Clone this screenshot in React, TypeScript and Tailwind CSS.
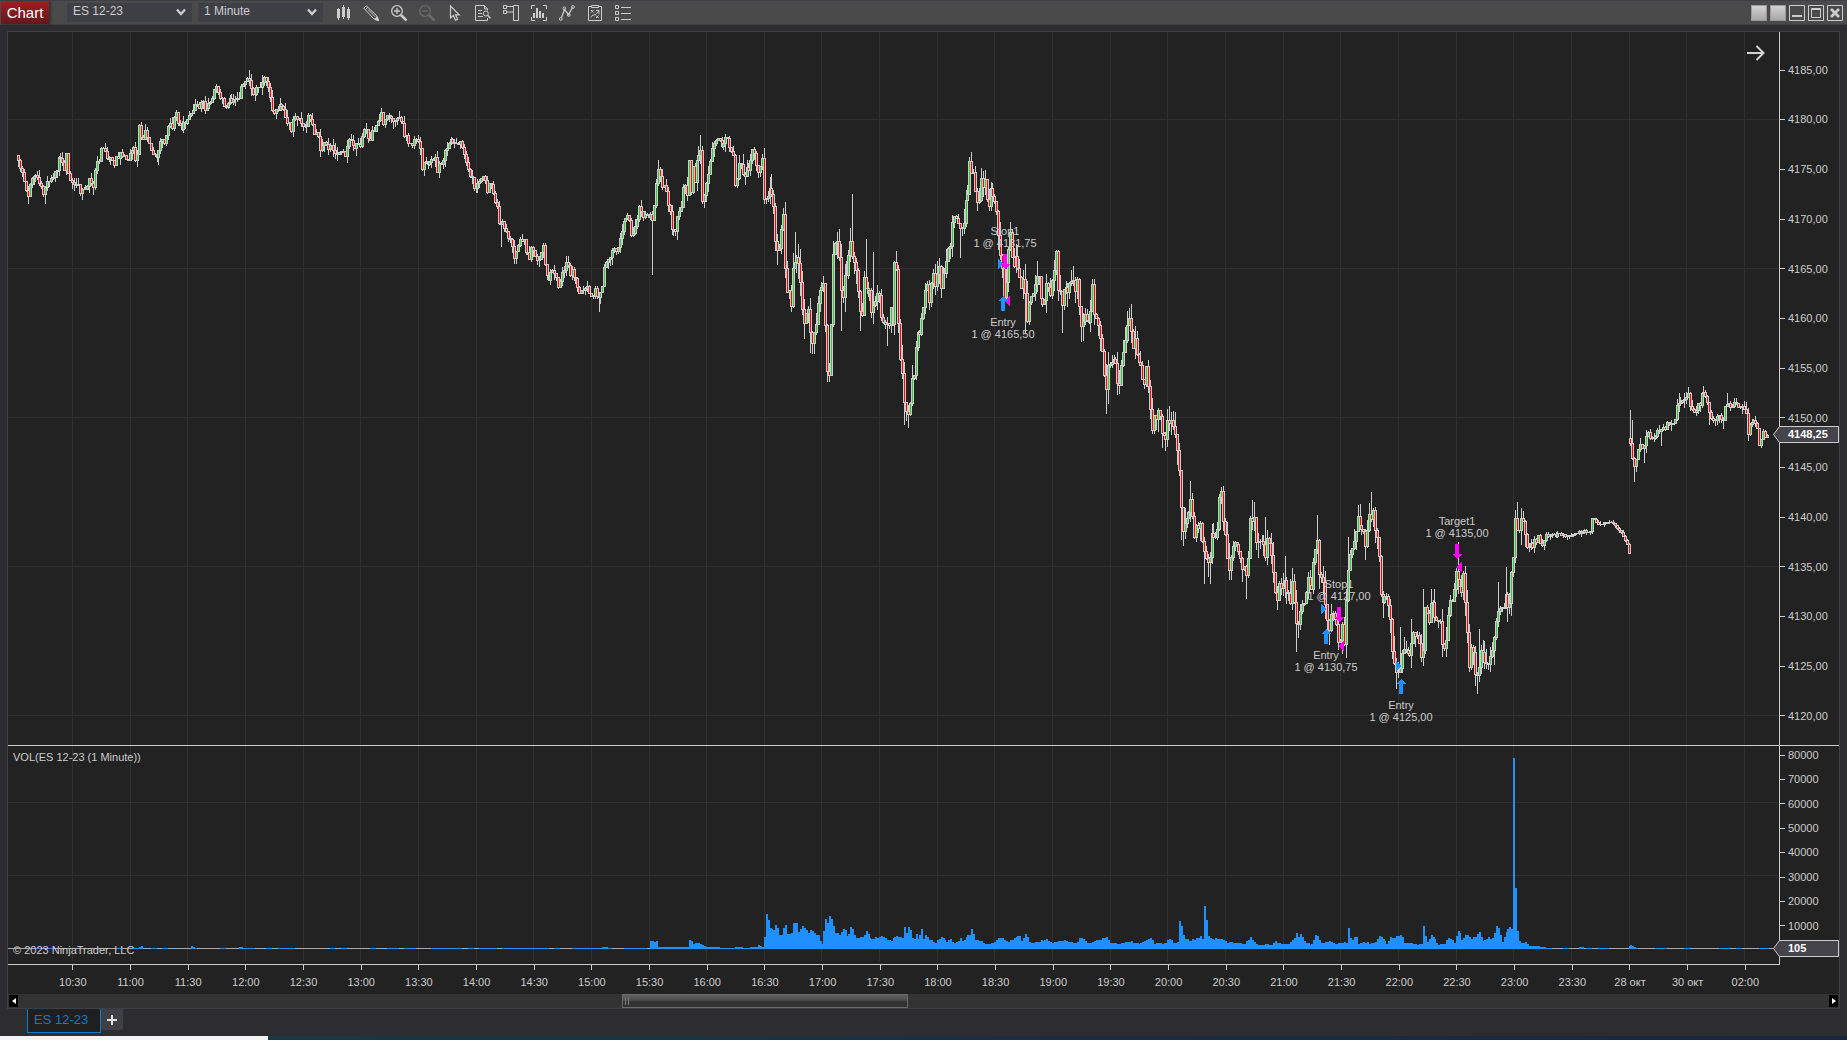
import type { ReactNode } from "react";

type Point = [number, number];

interface Candle {
  x: number;
  open: number;
  close: number;
  high: number;
  low: number;
}

interface Trade {
  name: string;
  detail: string;
  x: number;
  y: number;
}

const PRICE_VIEW = { x: 8, y: 32, width: 1771, height: 713 };
const VOLUME_VIEW = { x: 8, y: 746, width: 1771, height: 218 };
const BAR_STEP = 57.65 / 30;
const VOLUME_BASE = 949;

const PRICE_LABELS = [
  "4185,00", "4180,00", "4175,00", "4170,00", "4165,00", "4160,00", "4155,00",
  "4150,00", "4145,00", "4140,00", "4135,00", "4130,00", "4125,00", "4120,00",
];

const VOLUME_LABELS = ["80000", "70000", "60000", "50000", "40000", "30000", "20000", "10000"];

const TIME_LABELS = [
  "10:30", "11:00", "11:30", "12:00", "12:30", "13:00", "13:30", "14:00", "14:30", "15:00",
  "15:30", "16:00", "16:30", "17:00", "17:30", "18:00", "18:30", "19:00", "19:30", "20:00",
  "20:30", "21:00", "21:30", "22:00", "22:30", "23:00", "23:30", "28 окт", "30 окт", "02:00",
];

// closes of the main session
const SESSION: Point[] = [
  [16, 155], [18, 163], [22, 170], [25, 183], [27, 198], [29, 188], [31, 179], [35, 172], [38, 184], [40, 178],
  [43, 196], [45, 186], [49, 181], [53, 177], [57, 167], [60, 156], [62, 165], [64, 172], [66, 155], [68, 172],
  [71, 180], [74, 183], [77, 186], [80, 190], [83, 191], [86, 184], [90, 178], [93, 185], [96, 160], [99, 158],
  [101, 146], [105, 153], [108, 159], [112, 160], [114, 163], [117, 155], [121, 154], [126, 157], [131, 155],
  [133, 147], [136, 164], [139, 127], [142, 144], [145, 130], [148, 142], [151, 150], [154, 156], [157, 158],
  [160, 143], [164, 140], [167, 127], [170, 121], [172, 129], [174, 116], [176, 115], [179, 127], [181, 128],
  [184, 121], [188, 120], [191, 113], [195, 107], [200, 106], [203, 104], [206, 113], [209, 99], [211, 106],
  [214, 88], [216, 88], [219, 94], [223, 101], [227, 109], [230, 100], [234, 98], [239, 98], [240, 85], [243, 82],
  [246, 79], [248, 74], [251, 87], [254, 94], [257, 85], [260, 89], [264, 80], [267, 82], [270, 94], [273, 114],
  [277, 112], [281, 103], [284, 115], [288, 121], [291, 128], [294, 119], [298, 115], [302, 123], [305, 128],
  [308, 118], [311, 120], [314, 136], [317, 132], [321, 151], [324, 142], [327, 146], [332, 148], [336, 157],
  [341, 153], [345, 155], [348, 140], [353, 145], [360, 144], [363, 131], [366, 130], [369, 141], [373, 130],
  [378, 123], [381, 112], [383, 125], [388, 114], [392, 117], [396, 120], [402, 119], [404, 133], [409, 144],
  [414, 140], [419, 137], [422, 168], [425, 161], [430, 163], [434, 156], [437, 170], [442, 158], [446, 152],
  [449, 142], [455, 140], [460, 143], [463, 151], [466, 165], [470, 174], [474, 186], [478, 184], [480, 181],
  [484, 172], [487, 192], [489, 186], [492, 187], [495, 200], [497, 207], [500, 228], [503, 222], [505, 228],
  [508, 240], [511, 238], [514, 255], [518, 245], [521, 240], [524, 240], [528, 258], [531, 250], [535, 257],
  [538, 259], [541, 253], [543, 248], [546, 270], [549, 278], [552, 270], [555, 275], [558, 284], [562, 275],
  [565, 265], [568, 265], [570, 274], [573, 271], [577, 288], [580, 294], [584, 288], [588, 290], [591, 296],
  [595, 290], [599, 300], [602, 285], [604, 265], [606, 260], [609, 257], [613, 248], [617, 253], [620, 240],
  [623, 227], [625, 216], [629, 220], [631, 235], [635, 225], [639, 208], [643, 217], [647, 214], [650, 215],
  [652, 225], [654, 208], [655, 182], [659, 171], [661, 176], [663, 193], [665, 180], [668, 200], [671, 221],
  [674, 235], [677, 218], [681, 202], [684, 181], [687, 193], [689, 160], [691, 193], [693, 166], [695, 178],
  [698, 155], [701, 148], [702, 200], [705, 192], [708, 170], [711, 153], [715, 143], [719, 142], [723, 146],
  [727, 137], [730, 158], [733, 152], [735, 181], [738, 170], [741, 165], [744, 178], [748, 168], [752, 147],
  [755, 160], [758, 176], [762, 162], [764, 192], [767, 195], [771, 188], [773, 204], [775, 237], [779, 250],
  [783, 218], [784, 255], [787, 285], [791, 302], [793, 265], [798, 260], [801, 290], [804, 330], [808, 303],
  [810, 337], [813, 345], [817, 315], [820, 283], [824, 285], [826, 362], [829, 370], [831, 318], [833, 255],
  [835, 243], [839, 252], [842, 300], [845, 280], [848, 262], [850, 235], [852, 262], [855, 265], [859, 300],
  [862, 320], [864, 270], [867, 300], [869, 285], [871, 313], [875, 295], [878, 290], [881, 316], [885, 325],
  [889, 332], [891, 310], [893, 318], [894, 262], [896, 262], [897, 310], [899, 350], [903, 390], [905, 412],
  [908, 419], [911, 385], [914, 370], [916, 340], [919, 335], [921, 320], [924, 300], [926, 280], [929, 298],
  [932, 275], [935, 288], [938, 260], [940, 285], [943, 275], [946, 258], [950, 243], [952, 217], [957, 222],
  [961, 240], [965, 216], [967, 190], [969, 165], [972, 168], [975, 190], [978, 213], [980, 183], [984, 180],
  [988, 202], [992, 193], [995, 205], [998, 230], [1001, 262], [1004, 293], [1006, 275], [1008, 250], [1010, 235],
  [1013, 262], [1016, 255], [1018, 270], [1021, 288], [1024, 275], [1026, 320], [1029, 300], [1032, 292],
  [1036, 283], [1039, 282], [1043, 303], [1046, 278], [1050, 290], [1053, 270], [1056, 257], [1058, 285],
  [1062, 310], [1065, 270], [1068, 305], [1070, 273], [1074, 290], [1077, 275], [1079, 305], [1082, 330],
  [1086, 315], [1089, 320], [1092, 290], [1095, 320], [1099, 335], [1102, 352], [1106, 395], [1108, 372],
  [1112, 360], [1116, 370], [1118, 387], [1121, 360], [1124, 340], [1127, 322], [1130, 320], [1132, 348],
  [1136, 342], [1140, 365], [1143, 385], [1146, 372], [1149, 395], [1151, 432], [1154, 420], [1158, 410],
  [1162, 435], [1166, 432], [1170, 414], [1174, 421], [1176, 441], [1178, 448], [1180, 491], [1182, 528],
  [1184, 523], [1188, 509], [1191, 502], [1193, 539], [1198, 526], [1201, 532], [1205, 550], [1209, 573],
  [1212, 539], [1217, 528], [1220, 489], [1223, 516], [1226, 545], [1230, 571], [1235, 536], [1239, 553],
  [1243, 566], [1247, 575], [1250, 518], [1254, 518], [1257, 553], [1261, 532], [1264, 555], [1268, 539],
  [1272, 555], [1275, 598], [1280, 588], [1284, 577], [1289, 601], [1293, 582], [1297, 643], [1299, 608],
  [1302, 598], [1305, 604], [1308, 582], [1312, 582], [1316, 530], [1319, 571], [1322, 577], [1325, 604],
  [1328, 627], [1332, 617], [1336, 629], [1339, 644], [1342, 628], [1344, 641], [1347, 579], [1349, 555],
  [1353, 545], [1356, 525], [1360, 521], [1363, 534], [1366, 545], [1370, 512], [1373, 511], [1376, 539],
  [1379, 555], [1382, 612], [1386, 593], [1390, 614], [1392, 650], [1396, 673], [1400, 673], [1403, 641],
  [1407, 650], [1410, 655], [1412, 630], [1417, 641], [1422, 659], [1425, 614], [1429, 620], [1432, 598],
  [1435, 625], [1439, 614], [1442, 641], [1446, 644], [1449, 604], [1453, 591], [1457, 571], [1460, 601],
  [1462, 571], [1464, 585], [1466, 625], [1469, 662], [1472, 638], [1475, 673], [1478, 681], [1481, 644],
  [1485, 673], [1488, 662], [1492, 657], [1495, 625], [1500, 609], [1504, 604], [1506, 588], [1508, 612],
  [1511, 577], [1513, 550], [1514, 518], [1518, 529], [1521, 515], [1525, 529], [1527, 548], [1532, 545],
  [1538, 537], [1543, 547], [1546, 534], [1552, 535], [1560, 534], [1572, 535], [1580, 532], [1590, 531],
  [1592, 519], [1598, 524], [1606, 521], [1614, 524], [1620, 531], [1626, 543], [1630, 554],
];

// closes after the weekend gap
const REOPEN: Point[] = [
  [1629, 438], [1633, 465], [1636, 459], [1640, 445], [1641, 450], [1644, 448], [1647, 430], [1652, 438],
  [1656, 433], [1662, 430], [1667, 423], [1674, 421], [1677, 405], [1681, 402], [1687, 392], [1690, 405],
  [1694, 409], [1699, 405], [1703, 391], [1706, 395], [1709, 415], [1714, 422], [1718, 413], [1723, 418],
  [1726, 401], [1729, 408], [1734, 403], [1740, 407], [1746, 410], [1748, 434], [1753, 417], [1757, 430],
  [1759, 443], [1763, 430], [1766, 437], [1768, 436],
];

// tips of the long wicks
const WICKS: Point[] = [
  [28, 203], [44, 203], [61, 152], [249, 70], [501, 246], [514, 263], [599, 311], [652, 274], [657, 160],
  [699, 135], [777, 264], [777, 240], [795, 232], [797, 244], [804, 338], [810, 352], [827, 375], [836, 232],
  [841, 330], [851, 194], [860, 330], [866, 239], [873, 252], [887, 345], [904, 424], [908, 427], [960, 257],
  [971, 152], [1010, 222], [1025, 332], [1037, 264], [1062, 332], [1083, 340], [1093, 279], [1106, 413],
  [1135, 326], [1169, 410], [1173, 411], [1181, 539], [1190, 481], [1204, 583], [1210, 583], [1220, 487],
  [1246, 598], [1252, 500], [1254, 502], [1265, 517], [1285, 556], [1296, 651], [1317, 515], [1331, 604],
  [1341, 653], [1348, 537], [1358, 505], [1371, 492], [1396, 688], [1400, 627], [1411, 619], [1423, 589],
  [1431, 589], [1442, 656], [1458, 542], [1477, 693], [1479, 629], [1498, 582], [1506, 567], [1517, 502],
  [1630, 410], [1632, 420], [1634, 481], [1644, 462], [1661, 445], [1679, 393], [1703, 386], [1709, 424],
  [1723, 428], [1727, 393], [1748, 440],
];

const VOLUME: Point[] = [
  [16, 1], [138, 1], [141, 3], [143, 1], [190, 1], [192, 3], [194, 1], [238, 1], [240, 2], [243, 1], [600, 1],
  [604, 2], [608, 1], [650, 1], [651, 8], [657, 7], [658, 2], [688, 2], [690, 9], [693, 5], [698, 6], [702, 4],
  [706, 2], [730, 1], [740, 2], [745, 1], [757, 2], [759, 4], [761, 2], [763, 2], [765, 12], [767, 35], [769, 22],
  [771, 20], [774, 17], [776, 24], [779, 16], [781, 13], [785, 24], [787, 14], [791, 15], [794, 26], [796, 26],
  [798, 16], [803, 23], [805, 18], [811, 17], [815, 15], [819, 13], [821, 5], [823, 4], [825, 30], [827, 23],
  [830, 33], [832, 26], [835, 17], [838, 14], [844, 20], [848, 10], [851, 22], [853, 14], [858, 10], [862, 12],
  [867, 19], [870, 9], [875, 12], [880, 11], [882, 14], [888, 10], [892, 8], [896, 13], [900, 11], [903, 11],
  [905, 22], [907, 12], [909, 22], [912, 12], [914, 8], [916, 14], [919, 8], [921, 20], [923, 8], [926, 14],
  [930, 9], [936, 5], [941, 14], [946, 7], [950, 10], [955, 5], [961, 11], [964, 7], [969, 16], [972, 19],
  [974, 9], [980, 8], [986, 4], [992, 6], [996, 8], [999, 13], [1002, 12], [1008, 8], [1014, 9], [1018, 14],
  [1021, 7], [1026, 15], [1029, 7], [1038, 6], [1045, 10], [1052, 6], [1060, 9], [1068, 8], [1075, 5],
  [1081, 11], [1088, 5], [1094, 8], [1103, 10], [1106, 13], [1110, 6], [1120, 5], [1130, 8], [1140, 5],
  [1150, 11], [1154, 5], [1160, 6], [1163, 4], [1170, 10], [1173, 5], [1178, 8], [1180, 28], [1182, 18],
  [1184, 11], [1190, 8], [1195, 10], [1200, 12], [1203, 8], [1205, 43], [1207, 14], [1212, 9], [1220, 12],
  [1225, 7], [1232, 6], [1240, 6], [1244, 4], [1251, 12], [1256, 5], [1262, 3], [1266, 5], [1271, 3], [1276, 8],
  [1280, 5], [1290, 5], [1297, 16], [1299, 8], [1301, 16], [1303, 8], [1308, 6], [1311, 3], [1316, 14],
  [1320, 6], [1330, 8], [1337, 4], [1341, 7], [1347, 6], [1349, 21], [1351, 4], [1355, 14], [1358, 5],
  [1365, 7], [1370, 5], [1374, 6], [1380, 13], [1387, 4], [1391, 11], [1396, 11], [1401, 14], [1404, 6],
  [1410, 6], [1418, 4], [1422, 5], [1424, 23], [1426, 6], [1432, 13], [1437, 4], [1445, 5], [1450, 12],
  [1454, 4], [1459, 18], [1461, 7], [1465, 14], [1468, 16], [1470, 8], [1477, 15], [1480, 17], [1482, 7],
  [1488, 11], [1494, 12], [1497, 23], [1499, 19], [1502, 5], [1507, 19], [1510, 22], [1512, 18],
];

const LATE_VOLUME: Point[] = [
  [1520, 8], [1522, 4], [1526, 7], [1528, 3], [1536, 3], [1540, 2], [1548, 1], [1579, 1], [1581, 2], [1583, 1],
  [1629, 1], [1631, 4], [1633, 2], [1637, 1], [1770, 1],
];

const TRADES: Trade[] = [
  { name: "Stop1", detail: "1 @ 4181,75", x: 1005, y: 225 },
  { name: "Entry", detail: "1 @ 4165,50", x: 1003, y: 316 },
  { name: "Stop1", detail: "1 @ 4127,00", x: 1339, y: 578 },
  { name: "Entry", detail: "1 @ 4130,75", x: 1326, y: 649 },
  { name: "Target1", detail: "1 @ 4135,00", x: 1457, y: 515 },
  { name: "Entry", detail: "1 @ 4125,00", x: 1401, y: 699 },
];

const SELLS: Point[] = [[1005, 269], [1339, 622], [1457, 559]];
const BUYS: Point[] = [[1003, 296], [1326, 629], [1401, 679]];
const ENTRY_FILLS: Point[] = [[998, 264], [1321, 609], [1396, 666]];
const EXIT_FILLS: Point[] = [[1010, 301], [1344, 646], [1462, 567]];

const noise = (n: number) => {
  const v = Math.sin(n * 127.1 + 11.7) * 43758.5453;
  return v - Math.floor(v);
};

function valueAt(points: Point[], x: number) {
  if (x <= points[0][0]) return points[0][1];
  for (let i = 1; i < points.length; i++) {
    const [x1, y1] = points[i];
    if (x <= x1) {
      const [x0, y0] = points[i - 1];
      return y0 + ((y1 - y0) * (x - x0)) / (x1 - x0 || 1);
    }
  }
  return points[points.length - 1][1];
}

function wickSize(x: number) {
  if (x > 1545 && x < 1630) return 3;
  if (x < 650 || x > 1526) return 7;
  return x < 764 ? 10 : 15;
}

const barX = (k: number) => Math.floor(72.5 + k * BAR_STEP);

function buildCandles(points: Point[], from: number, to: number): Candle[] {
  const candles: Candle[] = [];
  let open = points[0][1];
  for (let k = from; k <= to; k++) {
    const x = barX(k);
    const size = wickSize(x);
    const close = Math.round(valueAt(points, x) + (noise(k) - 0.5) * size);
    const high = Math.min(open, close) - Math.round(noise(k + 0.3) ** 2 * size);
    const low = Math.max(open, close) + Math.round(noise(k + 0.6) ** 2 * size);
    candles.push({ x, open, close, high, low });
    open = close;
  }
  return candles;
}

const candles = [...buildCandles(SESSION, -28, 810), ...buildCandles(REOPEN, 811, 882)];

WICKS.forEach(([x, y]) => {
  const candle = candles.find((c) => c.x >= x);
  if (!candle) return;
  candle.high = Math.min(candle.high, y);
  candle.low = Math.max(candle.low, y);
});

const volumeBars = candles.map((c, i) => {
  if (c.x >= 1513 && c.x < 1515) return { x: c.x, height: 191 };
  if (c.x >= 1515 && c.x < 1517) return { x: c.x, height: 61 };
  if (c.x >= 1517 && c.x < 1519) return { x: c.x, height: 18 };
  const points = c.x < 1519 ? VOLUME : LATE_VOLUME;
  const base = Math.max(valueAt(points, c.x), valueAt(points, c.x + 1));
  if (base <= 1) {
    // thin trading leaves holes in the histogram
    const chance = c.x < 430 || c.x > 1548 ? 0.3 : 0.8;
    return { x: c.x, height: noise(Math.floor(i / 3)) < chance ? 1 : 0 };
  }
  return { x: c.x, height: Math.round(base * (base > 6 && base < 20 ? 0.85 + noise(i + 0.4) * 0.25 : 1)) };
});

const gridColumns = TIME_LABELS.map((_, i) => Math.floor(72.5 + 57.65 * i));

function TradingIcon({ children, dim = false }: { children: ReactNode; dim?: boolean }) {
  return (
    <svg
      viewBox="0 0 16 16"
      className={`size-4 ${dim ? "text-[#6a6a6a]" : "text-[#cccccc]"}`}
      fill="none"
      stroke="currentColor"
      aria-hidden="true"
    >
      {children}
    </svg>
  );
}

const TOOLS = [
  {
    label: "Chart style",
    icon: (
      <TradingIcon>
        <path d="M2 4h3v9H2zM7 2h3v10H7zM12 4h3v9h-3z" fill="currentColor" stroke="none" />
        <path d="M3.500 3v12M8.500 0v14M13.500 2v13" />
      </TradingIcon>
    ),
  },
  {
    label: "Drawing tools",
    icon: (
      <TradingIcon>
        <path d="M0.800 3.200 3.200 0.800 13.500 10.500 15.300 15.300 10.500 13.500z" />
        <path d="M2.500 4.500 5 2.200M5 4.500l7.300 7.300" />
        <path d="m15.800 15.800-4-1.500 2.500-2.500z" fill="currentColor" />
      </TradingIcon>
    ),
  },
  {
    label: "Zoom in",
    icon: (
      <TradingIcon>
        <circle cx="6" cy="6" r="5.300" strokeWidth="1.300" />
        <path d="M3 6h6M6 3v6" strokeWidth="1.300" />
        <path d="m10 10 5.500 5.500" strokeWidth="2.600" />
      </TradingIcon>
    ),
  },
  {
    label: "Zoom out",
    icon: (
      <TradingIcon dim>
        <circle cx="6" cy="6" r="5.300" strokeWidth="1.300" />
        <path d="M3 6h6" strokeWidth="1.300" />
        <path d="m10 10 5.500 5.500" strokeWidth="2.600" />
      </TradingIcon>
    ),
  },
  {
    label: "Pointer",
    icon: (
      <TradingIcon>
        <path d="M3.500 1v12l2.800-2.500 2.200 4.800 2-1-2-4.500h3.700z" strokeWidth="1.200" />
      </TradingIcon>
    ),
  },
  {
    label: "Data box",
    icon: (
      <TradingIcon>
        <path d="M12.500 13v2.500H.5V.5h9l3 3.500v1.500M9.500.5V4h3" />
        <path d="M3 5.500h4M3 8.500h4M3 11.500h5" />
        <circle cx="10.800" cy="8.500" r="2.500" />
        <path d="m12.500 10.300 3 3" strokeWidth="1.600" />
      </TradingIcon>
    ),
  },
  {
    label: "Chart trader",
    icon: (
      <TradingIcon>
        <path d="M.5.500h3v3h-3zM.5 5.500h3v3h-3zM10.500.5h5v15h-5zM4 1.500h6M4 7h6" />
      </TradingIcon>
    ),
  },
  {
    label: "Indicators",
    icon: (
      <TradingIcon>
        <path d="M4 .5H.5V4M12 .5h3.500V4M.5 12v3.500H4M15.500 12v3.500H12" />
        <path d="M2 8h2v5H2zM5 3h2v10H5zM8 6h2v7H8zM11 8h2v5h-2z" fill="currentColor" stroke="none" />
      </TradingIcon>
    ),
  },
  {
    label: "Data series",
    icon: (
      <TradingIcon>
        <path d="m2.500 12.500 3-8 4 5 4-7" strokeWidth="1.300" />
        <circle cx="1.800" cy="14" r="1.400" />
        <circle cx="5.300" cy="3.300" r="1.400" />
        <circle cx="9.800" cy="10" r="1.400" />
        <circle cx="14" cy="2" r="1.400" />
      </TradingIcon>
    ),
  },
  {
    label: "Strategies",
    icon: (
      <TradingIcon>
        <path d="M4 1.500H1.500v14h13v-14H12M4.500.5h7v2h-7z" />
        <path d="m4 5 2.500 2.500M6.500 5 4 7.500M9 10.500l2.500 2.500M11.500 10.500 9 13M4 12.500c0-3 6-2 7-6M9 5.500h3V9" />
      </TradingIcon>
    ),
  },
  {
    label: "Properties",
    icon: (
      <TradingIcon>
        <path d="M.5.500h3v3h-3zM.5 6.500h3v3h-3zM.5 12.500h3v3h-3zM6 2.500h10M6 8.500h10M6 14.500h10" />
      </TradingIcon>
    ),
  },
];

function ToolbarSelect({ label, value }: { label: string; value: string }) {
  return (
    <div className="relative flex h-[19px] w-[125px] bg-[#3f3f46]">
      <select
        aria-label={label}
        className="block h-4 w-full appearance-none self-start pl-[6px] text-xs leading-4 text-[#cccccc] outline-none"
      >
        <option>{value}</option>
      </select>
      <svg
        viewBox="0 0 10 8"
        className="pointer-events-none absolute top-[5px] right-[6px] h-2 w-2.5"
        fill="none"
        stroke="#cccccc"
        strokeWidth="2.400"
        aria-hidden="true"
      >
        <path d="m1 1.500 4 4.500 4-4.500" />
      </svg>
    </div>
  );
}

function TitleBar() {
  return (
    <header className="flex h-[25px] shrink-0 items-center border-t border-b border-[#3f3f46] bg-[#4a4a4b] pr-1">
      <h1 className="ml-px flex h-[23px] w-12 items-center justify-center bg-linear-to-b from-[#9c1f24] to-[#65171b] pt-0.5 text-[15px] text-white shadow-[2px_0_2px_#333]">
        Chart
      </h1>
      <div className="ml-[18px] flex gap-[6px]">
        <ToolbarSelect label="Instrument" value="ES 12-23" />
        <ToolbarSelect label="Interval" value="1 Minute" />
      </div>
      <div className="ml-3 flex gap-3">
        {TOOLS.map((tool) => (
          <button key={tool.label} type="button" aria-label={tool.label} className="size-4">
            {tool.icon}
          </button>
        ))}
      </div>
      <div className="ml-auto flex gap-[3px]">
        <button type="button" aria-label="Instrument link" className="size-4 border border-[#999] bg-linear-to-b from-[#d4d2d3] to-[#a9a6a8]" />
        <button type="button" aria-label="Interval link" className="size-4 border border-[#999] bg-linear-to-b from-[#d4d2d3] to-[#a9a6a8]" />
        <button type="button" aria-label="Minimize" className="size-4">
          <TradingIcon>
            <path d="M.5.500h15v15H.5z" />
            <path d="M3 11h10" strokeWidth="2" />
          </TradingIcon>
        </button>
        <button type="button" aria-label="Maximize" className="size-4">
          <TradingIcon>
            <path d="M.5.500h15v15H.5zM3.500 3.500h9v9h-9zM3 4.500h10" />
          </TradingIcon>
        </button>
        <button type="button" aria-label="Close" className="size-4">
          <TradingIcon>
            <path d="M.5.500h15v15H.5z" />
            <path d="m4 4 8 8M12 4l-8 8" strokeWidth="2.800" />
          </TradingIcon>
        </button>
      </div>
    </header>
  );
}

function PricePlot() {
  const { x, y, width, height } = PRICE_VIEW;
  return (
    <div className="relative min-h-0 min-w-0">
      <svg
        viewBox={`${x} ${y} ${width} ${height}`}
        preserveAspectRatio="none"
        shapeRendering="crispEdges"
        className="absolute inset-0 size-full"
        role="img"
        aria-label="ES 12-23 price"
      >
        <g fill="#303030">
          {gridColumns.map((gx) => (
            <rect key={gx} x={gx} y={y} width="1" height={height} />
          ))}
          {[119, 268, 417, 566, 715].map((gy) => (
            <rect key={gy} x={x} y={gy} width={width} height="1" />
          ))}
        </g>
        {candles.map((c) => {
          const top = Math.min(c.open, c.close);
          const body = Math.abs(c.open - c.close) + 1;
          return (
            <g key={c.x}>
              <rect x={c.x - 1} y={top} width="3" height={body} fill="#cccccc" />
              <rect x={c.x} y={c.high} width="1" height={c.low - c.high + 1} fill="#cccccc" />
              {body > 2 && (
                <rect
                  x={c.x}
                  y={top + 1}
                  width="1"
                  height={body - 2}
                  fill={c.close < c.open ? "#32cd32" : "#ff0000"}
                />
              )}
            </g>
          );
        })}
        {ENTRY_FILLS.map(([px, py]) => (
          <path key={px} d={`M${px} ${py - 5}l5 5-5 5z`} fill="#1e90ff" />
        ))}
        {EXIT_FILLS.map(([px, py]) => (
          <path key={px} d={`M${px} ${py - 5}l-6 5 6 5z`} fill="#ff00ff" />
        ))}
        {SELLS.map(([px, py]) => (
          <path key={px} d={`M${px} ${py}l-5-5h3v-10h4v10h3z`} fill="#ff00ff" />
        ))}
        {BUYS.map(([px, py]) => (
          <path key={px} d={`M${px} ${py}l-5 5h3v10h4v-10h3z`} fill="#1e90ff" />
        ))}
      </svg>
      {TRADES.map((trade) => (
        <p
          key={trade.detail}
          className="absolute -translate-x-1/2 text-center text-[11px] leading-3 whitespace-nowrap text-[#cccccc]"
          style={{
            left: `${((trade.x - x) / width) * 100}%`,
            top: `${((trade.y - y) / height) * 100}%`,
          }}
        >
          {trade.name}
          <br />
          {trade.detail}
        </p>
      ))}
      <button type="button" aria-label="Go to last bar" className="absolute top-3 right-3.5">
        <svg viewBox="0 0 18 18" className="size-[18px]" fill="none" stroke="#d4d4d4" strokeWidth="2" aria-hidden="true">
          <path d="M0 9h16.500M9.500 2l7 7-7 7" />
        </svg>
      </button>
    </div>
  );
}

function VolumePlot() {
  const { x, y, width, height } = VOLUME_VIEW;
  return (
    <div className="relative min-h-0 min-w-0">
      <svg
        viewBox={`${x} ${y} ${width} ${height}`}
        preserveAspectRatio="none"
        shapeRendering="crispEdges"
        className="absolute inset-0 size-full"
        role="img"
        aria-label="ES 12-23 volume"
      >
        <g fill="#303030">
          {gridColumns.map((gx) => (
            <rect key={gx} x={gx} y={y} width="1" height={height - 3} />
          ))}
          {[802, 875].map((gy) => (
            <rect key={gy} x={x} y={gy} width={width - 1} height="1" />
          ))}
        </g>
        <rect x={x} y={VOLUME_BASE - 1} width={width} height="1" fill="#a9a9a9" />
        {volumeBars.map((bar) => (
          <rect key={bar.x} x={bar.x} y={VOLUME_BASE - bar.height} width="2" height={bar.height} fill="#1e90ff" />
        ))}
      </svg>
      <p className="absolute top-[3px] left-[5px] text-[11px] leading-4 text-[#cccccc]">
        VOL(ES 12-23 (1 Minute))
      </p>
      <p className="absolute bottom-[6px] left-[5px] text-[11px] leading-4 text-[#cccccc]">
        © 2023 NinjaTrader, LLC
      </p>
    </div>
  );
}

function AxisLabels({ labels }: { labels: string[] }) {
  return (
    <>
      {labels.map((label) => (
        <li key={label} className="flex h-4 items-center gap-[3px]">
          <span className="h-px w-[5px] bg-[#cccccc]" />
          {label}
        </li>
      ))}
    </>
  );
}

function ValueTag({ value }: { value: string }) {
  return (
    <>
      <svg viewBox="0 0 66 17" preserveAspectRatio="none" className="absolute inset-0 size-full" aria-hidden="true">
        <path d="M.5 8.500 6.500.5h59v16h-59z" fill="#45444b" stroke="#cccccc" />
      </svg>
      <span className="relative block pl-[15px] text-[11px] leading-[17px] font-bold text-white">{value}</span>
    </>
  );
}

export default function App() {
  return (
    <div className="flex h-screen flex-col overflow-hidden bg-[#2d2d30] font-['Liberation_Sans',Arial,sans-serif] text-[#cccccc]">
      <TitleBar />

      <main className="mx-[7px] mt-[6px] flex min-h-0 flex-1 flex-col border border-[#3f3f46] bg-[#222222]">
        {/* PRICE */}
        <section className="grid min-h-0 flex-[713] grid-cols-[minmax(0,1fr)_60px]">
          <PricePlot />
          <div className="relative border-l border-[#cccccc]">
            <ul className="flex h-full flex-col justify-between pt-[30px] pb-[21px] text-[11px]">
              <AxisLabels labels={PRICE_LABELS} />
            </ul>
            <div className="absolute top-[55.250%] right-0 -left-[7px] h-[17px]">
              <ValueTag value="4148,25" />
            </div>
          </div>
        </section>

        {/* VOLUME */}
        <section className="grid min-h-0 flex-[218] grid-cols-[minmax(0,1fr)_60px] border-t border-[#cccccc]">
          <VolumePlot />
          <div className="relative border-l border-[#cccccc]">
            <ul className="flex h-full flex-col justify-between pt-px pb-[30px] text-[11px]">
              <AxisLabels labels={VOLUME_LABELS} />
            </ul>
            <div className="absolute right-0 bottom-[7px] -left-[7px] h-[17px]">
              <ValueTag value="105" />
            </div>
          </div>
        </section>

        {/* TIME AXIS */}
        <ul className="mr-[59px] flex h-[30px] shrink-0 border-t border-[#cccccc] pr-[6px] pl-9 text-[11px]">
          {TIME_LABELS.map((label) => (
            <li key={label} className="flex flex-1 flex-col items-center whitespace-nowrap">
              <span className="h-[5px] w-px bg-[#cccccc]" />
              <span className="mt-1 leading-4">{label}</span>
            </li>
          ))}
        </ul>

        <div className="flex h-3.5 shrink-0 items-center bg-[#333333] px-px">
          <button type="button" aria-label="Scroll left" className="flex h-3 w-[9px] items-center justify-center bg-black">
            <svg viewBox="0 0 4 6" className="h-1.5 w-1" fill="white" aria-hidden="true">
              <path d="M4 0v6L0 3z" />
            </svg>
          </button>
          <div className="h-full flex-1">
            <div className="ml-[33.350%] flex h-full w-[15.800%] items-center gap-0.5 border border-[#6a6a6a] bg-linear-to-b from-[#606060] from-0% via-[#484848] via-50% to-[#333333] to-50% pl-0.5">
              <span className="h-2 w-px bg-[#777]" />
              <span className="h-2 w-px bg-[#777]" />
            </div>
          </div>
          <button type="button" aria-label="Scroll right" className="flex h-3 w-[9px] items-center justify-center bg-black">
            <svg viewBox="0 0 4 6" className="h-1.5 w-1" fill="white" aria-hidden="true">
              <path d="M0 0v6l4-3z" />
            </svg>
          </button>
        </div>
      </main>

      <nav className="flex h-[27px] shrink-0 items-start pl-[27px]">
        <a
          href="#es"
          className="flex h-6 w-[74px] items-center border border-t-0 border-[#0e7ad0] bg-[#1f1f20] pb-0.5 pl-[6px] text-[13px] text-[#0e7ad0]"
        >
          ES 12-23
        </a>
        <button type="button" aria-label="Add tab" className="flex h-[21px] w-[22px] items-center justify-center bg-[#3f3f46]">
          <svg viewBox="0 0 10 10" className="size-2.5" stroke="#e0e0e0" strokeWidth="2" aria-hidden="true">
            <path d="M5 0v10M0 5h10" />
          </svg>
        </button>
      </nav>

      <footer className="flex h-1 shrink-0 bg-linear-to-r from-[#1c3a40] to-[#1a2540]">
        <div className="w-[14.500%] bg-[#f3f3f3]" />
      </footer>
    </div>
  );
}
